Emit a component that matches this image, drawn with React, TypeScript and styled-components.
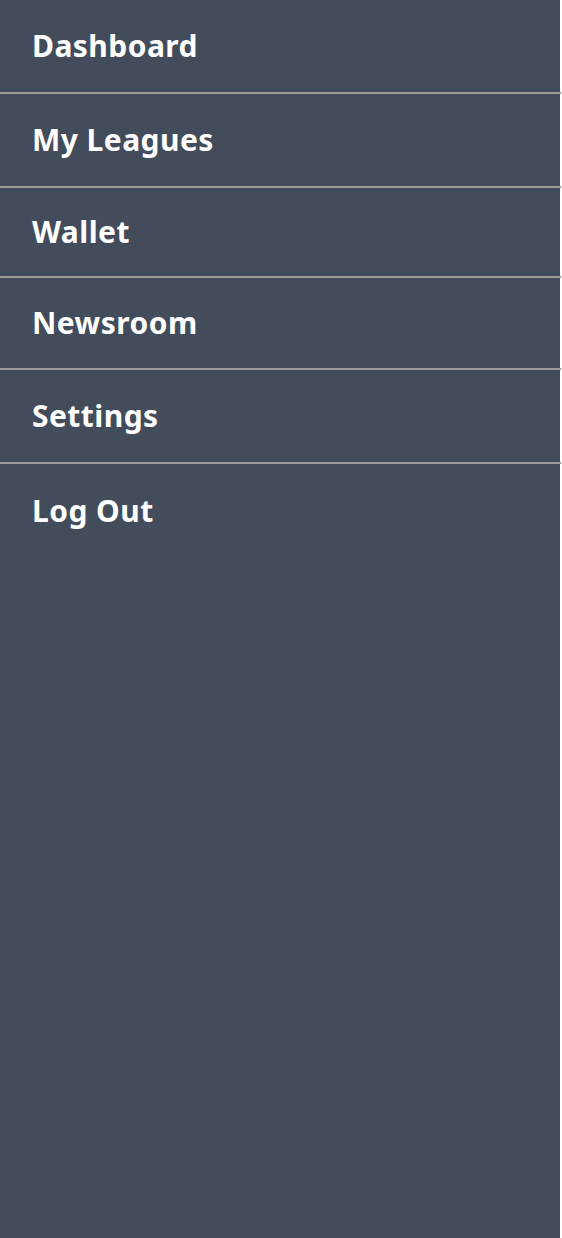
import React from "react";
import styled, { createGlobalStyle } from "styled-components";

const Global = createGlobalStyle`
  html, body {
    margin: 0;
    padding: 0;
    background: #ffffff;
  }
  * { box-sizing: border-box; }
`;

const Sidebar = styled.nav`
  width: 560px;
  height: 1238px;
  background: #434c5b;
  display: flex;
  flex-direction: column;
`;

const Item = styled.a<{ $h: number }>`
  display: flex;
  align-items: center;
  height: ${(p) => p.$h}px;
  padding: 0 0 0 32px;
  color: #ffffff;
  text-decoration: none;
  font-family: "Noto Sans", "Open Sans", sans-serif;
  font-weight: 700;
  font-size: 30px;
  line-height: 1;
  letter-spacing: 0.45px;
  cursor: pointer;
`;

const Divider = styled.hr`
  margin: 0;
  border: none;
  width: 561px;
  height: 2px;
  background: #9c9c9c;
  flex: none;
`;

const items = [
  { label: "Dashboard", h: 92 },
  { label: "My Leagues", h: 92 },
  { label: "Wallet", h: 88 },
  { label: "Newsroom", h: 90 },
  { label: "Settings", h: 92 },
  { label: "Log Out", h: 94 },
];

export default function App() {
  return (
    <>
      <Global />
      <Sidebar>
        {items.map((it, i) => (
          <React.Fragment key={it.label}>
            <Item $h={it.h}>{it.label}</Item>
            {i < items.length - 1 && <Divider />}
          </React.Fragment>
        ))}
      </Sidebar>
    </>
  );
}
